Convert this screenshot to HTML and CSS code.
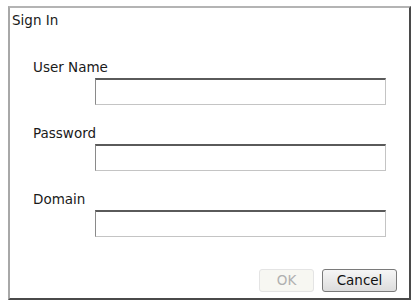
FILE: index.html
```html
<!DOCTYPE html>
<html>
<head>
<meta charset="utf-8">
<link rel="stylesheet" href="styles.css">
</head>
<body>
<div class="dialog">
  <div class="title">Sign In</div>
  <div class="fields">
    <div class="field">
      <label class="label">User Name</label>
      <div class="input"></div>
    </div>
    <div class="field">
      <label class="label">Password</label>
      <div class="input"></div>
    </div>
    <div class="field">
      <label class="label">Domain</label>
      <div class="input"></div>
    </div>
  </div>
  <div class="buttons">
    <div class="btn btn-disabled">OK</div>
    <div class="btn">Cancel</div>
  </div>
</div>
</body>
</html>
```
FILE: styles.css
```css
html, body {
  margin: 0;
  padding: 0;
  background: #ffffff;
}
body {
  font-family: "DejaVu Sans", Tahoma, sans-serif;
  font-size: 13.5px;
  color: #1a1a1a;
}
.dialog {
  box-sizing: border-box;
  margin: 6px 0 0 8px;
  width: 403px;
  height: 294px;
  border-top: 2px solid #b4b4b4;
  border-left: 2px solid #a8a8a8;
  border-right: 2px solid #4a4a4a;
  border-bottom: 2px solid #4a4a4a;
  display: flex;
  flex-direction: column;
}
.title {
  padding: 4px 0 0 2px;
  line-height: 16px;
}
.fields {
  display: flex;
  flex-direction: column;
  gap: 20px;
  padding: 31px 0 0 23px;
}
.field {
  display: flex;
  flex-direction: column;
}
.label {
  line-height: 16px;
  height: 16px;
}
.input {
  box-sizing: border-box;
  margin: 3px 0 0 62px;
  width: 291px;
  height: 27px;
  border: 1px solid #c4c4c4;
  border-top: 2px solid #5a5a5a;
  border-left: 1px solid #8a8a8a;
  background: #fff;
}
.buttons {
  display: flex;
  justify-content: flex-end;
  gap: 8px;
  margin-top: auto;
  padding: 0 12px 6px 0;
}
.btn {
  box-sizing: border-box;
  height: 23px;
  width: 55px;
  line-height: 21px;
  text-align: center;
  border: 1px solid #7a7a7a;
  border-radius: 3px;
  background: linear-gradient(#f6f6f6, #dcdcdc);
  color: #111;
}
.btn:last-child {
  width: 75px;
}
.btn-disabled {
  border-color: #e4e4e4;
  background: #f7f7f2;
  color: #b0b0b0;
}
```
